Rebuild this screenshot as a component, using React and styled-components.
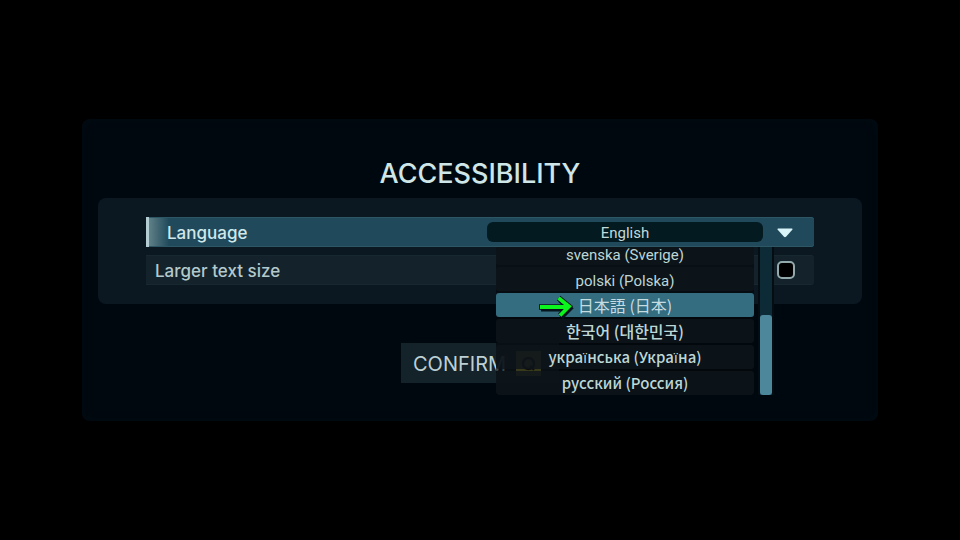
import { useState } from "react"
import styled, { createGlobalStyle, css } from "styled-components"

const GlobalStyle = createGlobalStyle`
    * {
        box-sizing: border-box;
    }
    body {
        margin: 0;
        background-color: #000;
        font-family: Inter, "Noto Sans", "Noto Sans CJK JP", sans-serif;
    }
`

const Screen = styled.main`
    min-height: 100vh;
    display: flex;
    align-items: center;
    justify-content: center;
`

const Panel = styled.section`
    width: calc(100% - 164px);
    padding: 38px 16px;
    display: flex;
    flex-direction: column;
    border-radius: 8px;
    background-color: #00080f;
    box-shadow: inset 0 0 8px 0 #020c13;
`

const Title = styled.h1`
    margin: 0 0 7px;
    text-align: center;
    font-size: 27px;
    font-weight: 500;
    line-height: 34px;
    color: #cfe6e8;
`

const Settings = styled.div`
    padding: 19px 48px;
    display: flex;
    flex-direction: column;
    gap: 8px;
    border-radius: 8px;
    background-color: #0b1821;
`

const Row = styled.div`
    height: 30px;
    display: flex;
    align-items: center;
    padding-left: 9px;
    border-radius: 0 3px 3px 0;
    background-color: #14232b;
    border: 1px solid #18282f;
    border-width: 1px 0;
    color: #b3c9cc;

    ${p => p.$active && css`
        padding-left: 18px;
        border: 0;
        border-left: 3px solid #b4cdd3;
        background: linear-gradient(90deg, #5f8088 0, #204a5b 20px);
        box-shadow: inset 0 1px 0 #2d5765, inset 0 -1px 0 #2d5765;
        color: #cfe8ea;
    `}
`

const Label = styled.label`
    flex: 1;
    padding-top: 2px;
    font-size: 17px;
    font-weight: 500;
    line-height: 20px;
`

const Dropdown = styled.div`
    position: relative;
    width: 276px;
    height: 20px;
`

const Select = styled.select`
    display: block;
    width: 100%;
    height: 20px;
    padding: 2px 0 0;
    border: 0;
    border-radius: 6px;
    appearance: none;
    background-color: #031a20;
    color: #c2d9da;
    font-family: Roboto, sans-serif;
    font-size: 15px;
    line-height: 18px;
    text-align: center;
    text-align-last: center;
    outline: none;
`

const Aside = styled.div`
    width: 51px;
    display: flex;
    padding-left: 14px;
`

const Caret = styled.svg`
    width: 16px;
    height: 12px;
    fill: #d8f4f8;
`

const Menu = styled.div`
    position: absolute;
    z-index: 1;
    top: 25px;
    left: 9px;
    width: 276px;
    height: 148px;
    display: flex;
    gap: 6px;
`

const List = styled.div`
    flex: 1;
    display: flex;
    flex-direction: column;
    justify-content: flex-end;
    gap: 2px;
    overflow: hidden;
    border-radius: 3px;
    background-color: #04090db3;
`

const Option = styled.button`
    position: relative;
    flex: none;
    height: 24px;
    padding: ${p => p.$latin ? "4px 0 0" : "0"};
    border: 0;
    border-radius: 3px;
    background-color: ${p => p.$selected ? "#346c80" : "#0e151bd0"};
    color: ${p => p.$selected ? "#c5dde0" : "#bdd6d6"};
    font-family: ${p => p.$font}, sans-serif;
    font-size: ${p => p.$size}px;
    font-weight: ${p => p.$latin ? 400 : p.$weight};
    line-height: ${p => p.$latin ? 20 : 24}px;
    text-align: center;
`

const Pointer = styled.svg`
    position: absolute;
    top: 1px;
    left: 42px;
    width: 36px;
    height: 26px;
`

const Track = styled.div`
    width: 12px;
    display: flex;
    align-items: flex-end;
    background-color: #0d2b36;
    box-shadow: 0 0 0 2px #050d13;
    clip-path: inset(0 -2px 0 -2px);
`

const Thumb = styled.div`
    width: 100%;
    height: 80px;
    border-radius: 3px;
    background-color: #4d879c;
`

const Check = styled.input`
    width: 18px;
    height: 18px;
    margin: 0;
    appearance: none;
    border: 2px solid #93aaac;
    border-radius: 5px;
    background-color: #000;
`

const Confirm = styled.button`
    align-self: center;
    width: 158px;
    height: 40px;
    margin-top: 39px;
    padding: 0 18px 0 12px;
    display: flex;
    align-items: center;
    justify-content: space-between;
    border: 0;
    background-color: #14222a;
    color: #bdd0d4;
    font-family: inherit;
    font-size: 20px;
    line-height: 24px;
`

const ConfirmText = styled.span`
    padding-top: 2px;
`

const Key = styled.svg`
    width: 25px;
    height: 25px;
`

const languages = [
    { name: "svenska (Sverige)", latin: true, size: 15, font: "Roboto" },
    { name: "polski (Polska)", latin: true, size: 15, font: "Roboto" },
    { name: "日本語 (日本)", weight: 400, size: 16, font: '"Noto Sans CJK JP"' },
    { name: "한국어 (대한민국)", weight: 500, size: 16, font: '"Noto Sans CJK KR"' },
    { name: "українська (Україна)", weight: 500, size: 15, font: '"Noto Sans CJK JP"' },
    { name: "русский (Россия)", weight: 500, size: 15, font: '"Noto Sans CJK JP"' },
]

export default function App() {

    const [hovered, setHovered] = useState("日本語 (日本)");
    const [language, setLanguage] = useState("English");
    const [larger, setLarger] = useState(false);

    return <Screen>
        <GlobalStyle />
        <Panel>
            <Title>ACCESSIBILITY</Title>
            <Settings>
                <Row $active>
                    <Label htmlFor="language">Language</Label>
                    <Dropdown>
                        <Select id="language" value={language} onChange={(e) => { setLanguage(e.target.value) }}>
                            <option>English</option>
                            {languages.map(l => <option key={l.name}>{l.name}</option>)}
                        </Select>
                        <Menu>
                            <List role="listbox" aria-label="Language">
                                {
                                    languages.map(l => (
                                        <Option
                                            key={l.name}
                                            type="button"
                                            role="option"
                                            aria-selected={hovered === l.name}
                                            $selected={hovered === l.name}
                                            $latin={l.latin}
                                            $weight={l.weight}
                                            $size={l.size}
                                            $font={l.font}
                                            onMouseEnter={() => { setHovered(l.name) }}
                                            onClick={() => { setLanguage(l.name) }}
                                        >
                                            {hovered === l.name && (
                                                <Pointer viewBox="0 0 36 26" fill="none">
                                                    <path d="M3 15h27M22 6l10 8.500-9 9" stroke="#06151b" strokeWidth="5" />
                                                    <path d="M1 13h29M20.500 4l10.500 8.500-9 9" stroke="#06151b" strokeWidth="5.500" />
                                                    <path d="M2 13h28M20.500 4l10.500 8.500-9 9" stroke="#0cf51c" strokeWidth="3.800" />
                                                </Pointer>
                                            )}
                                            {l.name}
                                        </Option>
                                    ))
                                }
                            </List>
                            <Track>
                                <Thumb />
                            </Track>
                        </Menu>
                    </Dropdown>
                    <Aside>
                        <Caret viewBox="0 -2 16 12">
                            <path d="M1 .5h14q1 .3.3 1.200L9 8.800q-1 .9-2 0L.7 1.700Q0 .8 1 .5z" />
                        </Caret>
                    </Aside>
                </Row>
                <Row>
                    <Label htmlFor="larger">Larger text size</Label>
                    <Aside>
                        <Check
                            id="larger"
                            type="checkbox"
                            checked={larger}
                            onChange={(e) => { setLarger(e.target.checked) }}
                        />
                    </Aside>
                </Row>
            </Settings>
            <Confirm type="button">
                <ConfirmText>CONFIRM</ConfirmText>
                <Key viewBox="0 0 25 25" aria-hidden="true">
                    <rect width="25" height="25" fill="#b5ad3c" />
                    <circle cx="12.500" cy="12.500" r="5.500" fill="none" stroke="#20200c" strokeWidth="2.500" />
                    <path d="M14 15l4 4" stroke="#20200c" strokeWidth="2" />
                </Key>
            </Confirm>
        </Panel>
    </Screen>
}
